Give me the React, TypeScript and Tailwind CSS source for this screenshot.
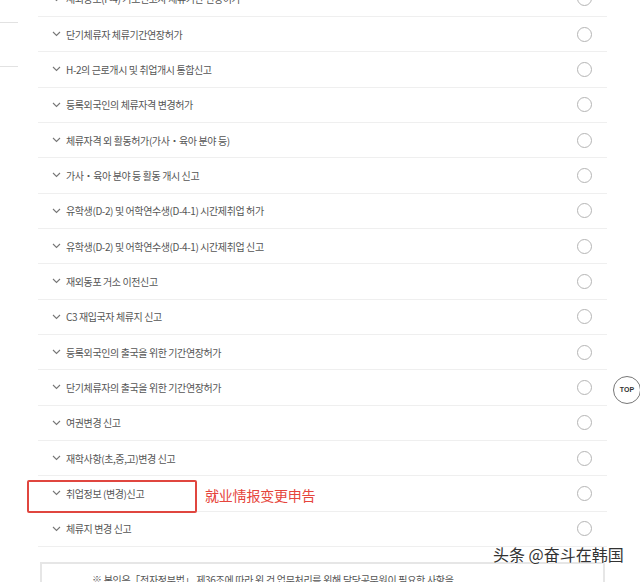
const rows = [
  '재외동포(F-4) 거소신고자 체류기간 연장허가',
  '단기체류자 체류기간연장허가',
  'H-2의 근로개시 및 취업개시 통합신고',
  '등록외국인의 체류자격 변경허가',
  '체류자격 외 활동허가(가사・육아 분야 등)',
  '가사・육아 분야 등 활동 개시 신고',
  '유학생(D-2) 및 어학연수생(D-4-1) 시간제취업 허가',
  '유학생(D-2) 및 어학연수생(D-4-1) 시간제취업 신고',
  '재외동포 거소 이전신고',
  'C3 재입국자 체류지 신고',
  '등록외국인의 출국을 위한 기간연장허가',
  '단기체류자의 출국을 위한 기간연장허가',
  '여권변경 신고',
  '재학사항(초,중,고)변경 신고',
  '취업정보 (변경)신고',
  '체류지 변경 신고',
];

function Chevron() {
  return (
    <svg width="9" height="6" viewBox="0 0 9 6" className="shrink-0">
      <path d="M1 1l3.5 3.5L8 1" fill="none" stroke="#777" strokeWidth="1.1" />
    </svg>
  );
}

export default function App() {
  return (
    <div
      className="relative w-[640px] h-[582px] overflow-hidden bg-white flex"
      style={{ fontFamily: '"Noto Sans CJK KR", "Noto Sans", sans-serif' }}
    >
      <div className="w-[18px] shrink-0 pt-[22px]">
        <div className="h-px bg-[#e2e2e2]" />
        <div className="h-px bg-[#e2e2e2] mt-[43px]" />
      </div>

      <div className="ml-[20px] w-[569px] shrink-0 -mt-[18.33px]">
        {rows.map((r, i) => (
          <div
            key={i}
            className="h-[35.33px] flex items-center border-b border-[#efefef] pl-[14px] pr-[15px]"
          >
            <Chevron />
            <span className="ml-[5px] text-[10px] tracking-[-0.4px] text-[#555] flex-1 truncate">
              {r}
            </span>
            <span className="w-[15px] h-[15px] rounded-full border border-[#b5b5b5]" />
          </div>
        ))}

        <div className="mt-[15px] ml-[2px] w-[565px] h-[60px] border-2 border-[#e6e6e6] pt-[8px] pl-[50px]">
          <p className="text-[10px] text-[#555] tracking-[-0.3px] whitespace-nowrap">
            ※ 본인은「전자정부법」 제36조에 따라 위 건 업무처리를 위해 담당공무원이 필요한 사항을
          </p>
        </div>
      </div>

      <div className="absolute left-[27px] top-[480px] w-[170px] h-[33px] border-2 border-[#e0463f] rounded-[2px]" />
      <span className="absolute left-[205px] top-[484px] text-[14px] leading-[22px] text-[#e6453c] tracking-[-0.2px]">
        就业情报变更申告
      </span>

      <div className="absolute left-[613px] top-[376px] w-[28px] h-[28px] rounded-full border-[1.5px] border-[#777] bg-white flex items-center justify-center">
        <span className="text-[7px] font-bold text-[#333]" style={{ fontFamily: '"Liberation Sans", sans-serif' }}>
          TOP
        </span>
      </div>

      <span
        className="absolute left-[493px] top-[543px] text-[16px] leading-[22px] text-[#333] whitespace-nowrap"
        style={{ textShadow: '0 0 2px #fff, 0 0 2px #fff, 0 0 1px #fff', fontFamily: '"Noto Sans CJK SC", sans-serif' }}
      >
        头条 @奋斗在韩国
      </span>
    </div>
  );
}
